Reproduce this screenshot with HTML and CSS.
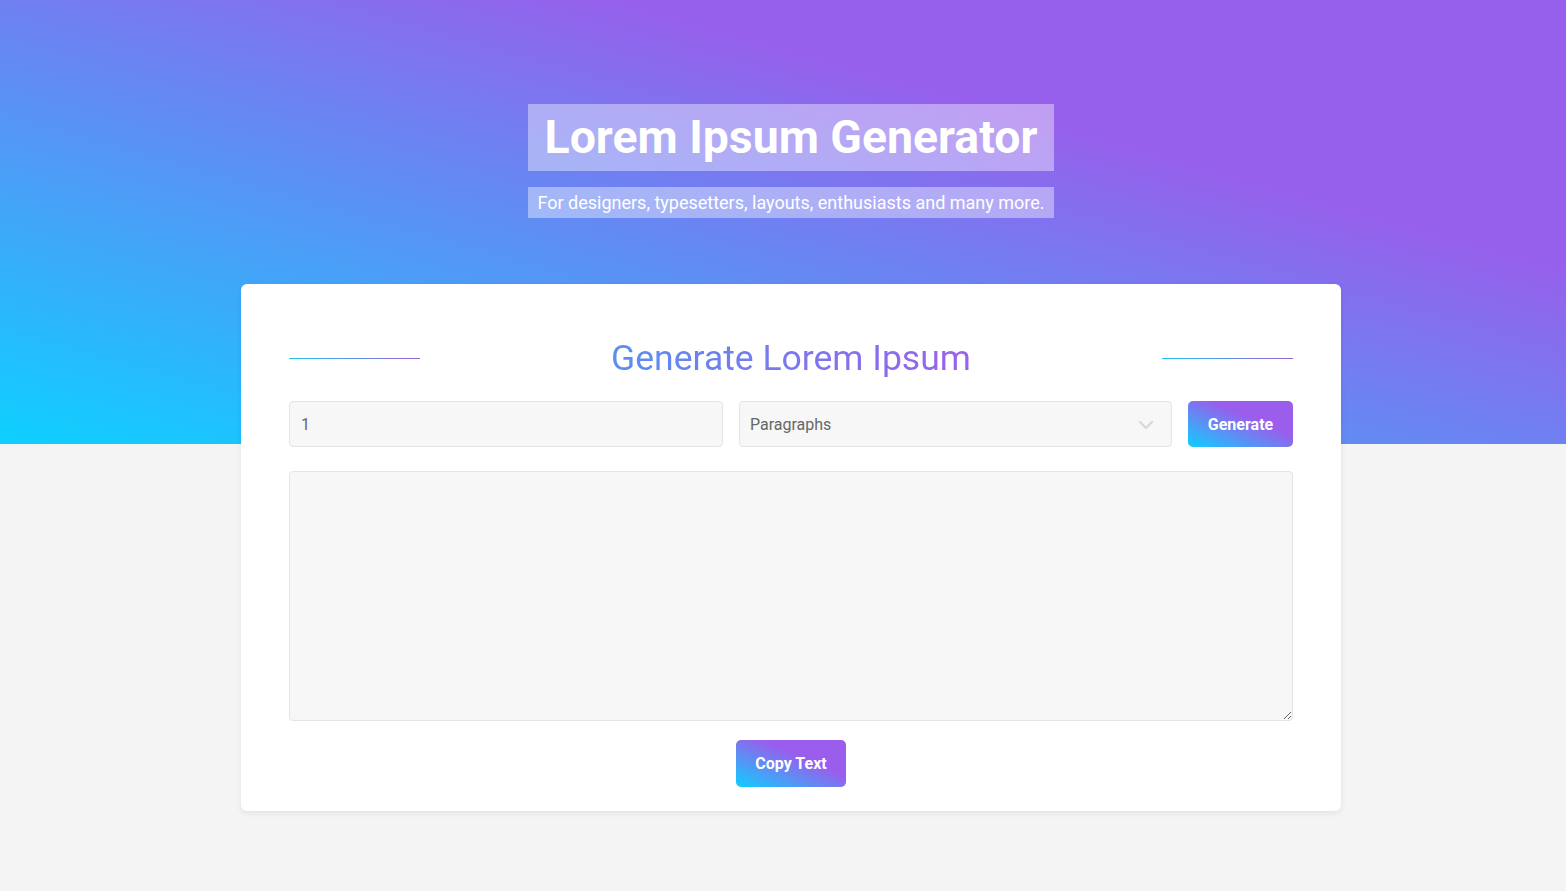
FILE: index.html
```html
<!DOCTYPE html>
<html lang="en">
<head>
<meta charset="utf-8">
<title>Lorem Ipsum Generator</title>
<link rel="stylesheet" href="styles.css">
</head>
<body>
<header class="hero">
  <div class="hero-titles">
    <h1 class="hero-title">Lorem Ipsum Generator</h1>
    <p class="hero-sub">For designers, typesetters, layouts, enthusiasts and many more.</p>
  </div>
</header>
<div class="page">
  <main class="card">
    <div class="card-head">
      <span class="rule"></span>
      <h2 class="card-title"><span class="grad-text">Generate Lorem Ipsum</span></h2>
      <span class="rule"></span>
    </div>
    <div class="controls">
      <input class="field count" type="text" value="1">
      <div class="select-wrap">
        <div class="field select">Paragraphs</div>
        <svg class="chev" width="16" height="10" viewBox="0 0 16 10"><path d="M2 2 L8 8 L14 2" fill="none" stroke="#d9d9d9" stroke-width="2.4" stroke-linecap="round" stroke-linejoin="round"/></svg>
      </div>
      <button class="btn gen">Generate</button>
    </div>
    <textarea class="output"></textarea>
    <div class="copy-row">
      <button class="btn copy">Copy Text</button>
    </div>
  </main>
</div>
</body>
</html>
```

FILE: styles.css
```css
* { box-sizing: border-box; }
html, body { margin: 0; padding: 0; }
body {
  background: #f4f4f4;
  font-family: Roboto, "Liberation Sans", Arial, sans-serif;
  min-height: 891px;
}
.hero {
  height: 444px;
  background: linear-gradient(to top right, #0dd0ff 0%, #9760ec 70%, #9760ec 100%);
  display: flex;
  justify-content: center;
  padding: 104px 0 0 16px;
}
.hero-titles {
  display: flex;
  flex-direction: column;
  align-items: stretch;
  gap: 16px;
  align-self: flex-start;
}
.hero-title {
  margin: 0;
  background: rgba(255, 255, 255, 0.4);
  color: #fff;
  font-weight: 700;
  font-size: 46.4px;
  line-height: 67px;
  height: 67px;
  padding: 0 17px;
  text-align: center;
  white-space: nowrap;
}
.hero-sub {
  margin: 0;
  background: rgba(255, 255, 255, 0.4);
  color: #fff;
  font-size: 18px;
  line-height: 31px;
  padding: 0 8px;
  text-align: center;
  white-space: nowrap;
}
.page {
  padding-left: 16px;
}
.card {
  width: 1100px;
  margin: -160px auto 0;
  background: #fff;
  border-radius: 6px;
  box-shadow: 0 2px 6px rgba(0, 0, 0, 0.08);
  padding: 50px 48px 24px;
  position: relative;
}
.card-head {
  display: flex;
  align-items: center;
  height: 48px;
  margin-bottom: 19px;
}
.rule {
  width: 131px;
  height: 1px;
  background: linear-gradient(to right, #22c2f2, #9a5fd6);
}
.card-title {
  flex: 1;
  margin: 0;
  text-align: center;
  font-weight: 400;
  font-size: 35.5px;
  line-height: 48px;
}
.grad-text {
  background: linear-gradient(to right, #5a8ff0, #9b61ea);
  -webkit-background-clip: text;
  background-clip: text;
  color: transparent;
}
.controls {
  display: flex;
  gap: 16px;
  height: 46px;
}
.field {
  background: #f7f7f7;
  border: 1px solid #e4e4e4;
  border-radius: 4px;
  font-family: Roboto, "Liberation Sans", Arial, sans-serif;
  font-size: 16px;
  color: #666;
  padding: 0 11px;
  height: 46px;
  outline: none;
}
.count { width: 434px; }
.select-wrap {
  position: relative;
  width: 433px;
}
.select {
  width: 100%;
  line-height: 45px;
  padding-left: 10px;
}
.chev {
  position: absolute;
  right: 18px;
  top: 19px;
}
.btn {
  border: none;
  border-radius: 5px;
  color: #fff;
  font-family: Roboto, "Liberation Sans", Arial, sans-serif;
  font-weight: 700;
  font-size: 16px;
  background: linear-gradient(to top right, #0dcfff 0%, #9a5dec 62%);
  cursor: pointer;
}
.gen {
  width: 105px;
  height: 46px;
}
.output {
  display: block;
  width: 100%;
  height: 250px;
  margin-top: 24px;
  background: #f7f7f7;
  border: 1px solid #e4e4e4;
  border-radius: 4px;
  outline: none;
  resize: vertical;
}
.copy-row {
  display: flex;
  justify-content: center;
  margin-top: 19px;
}
.copy {
  width: 110px;
  height: 47px;
}
```
